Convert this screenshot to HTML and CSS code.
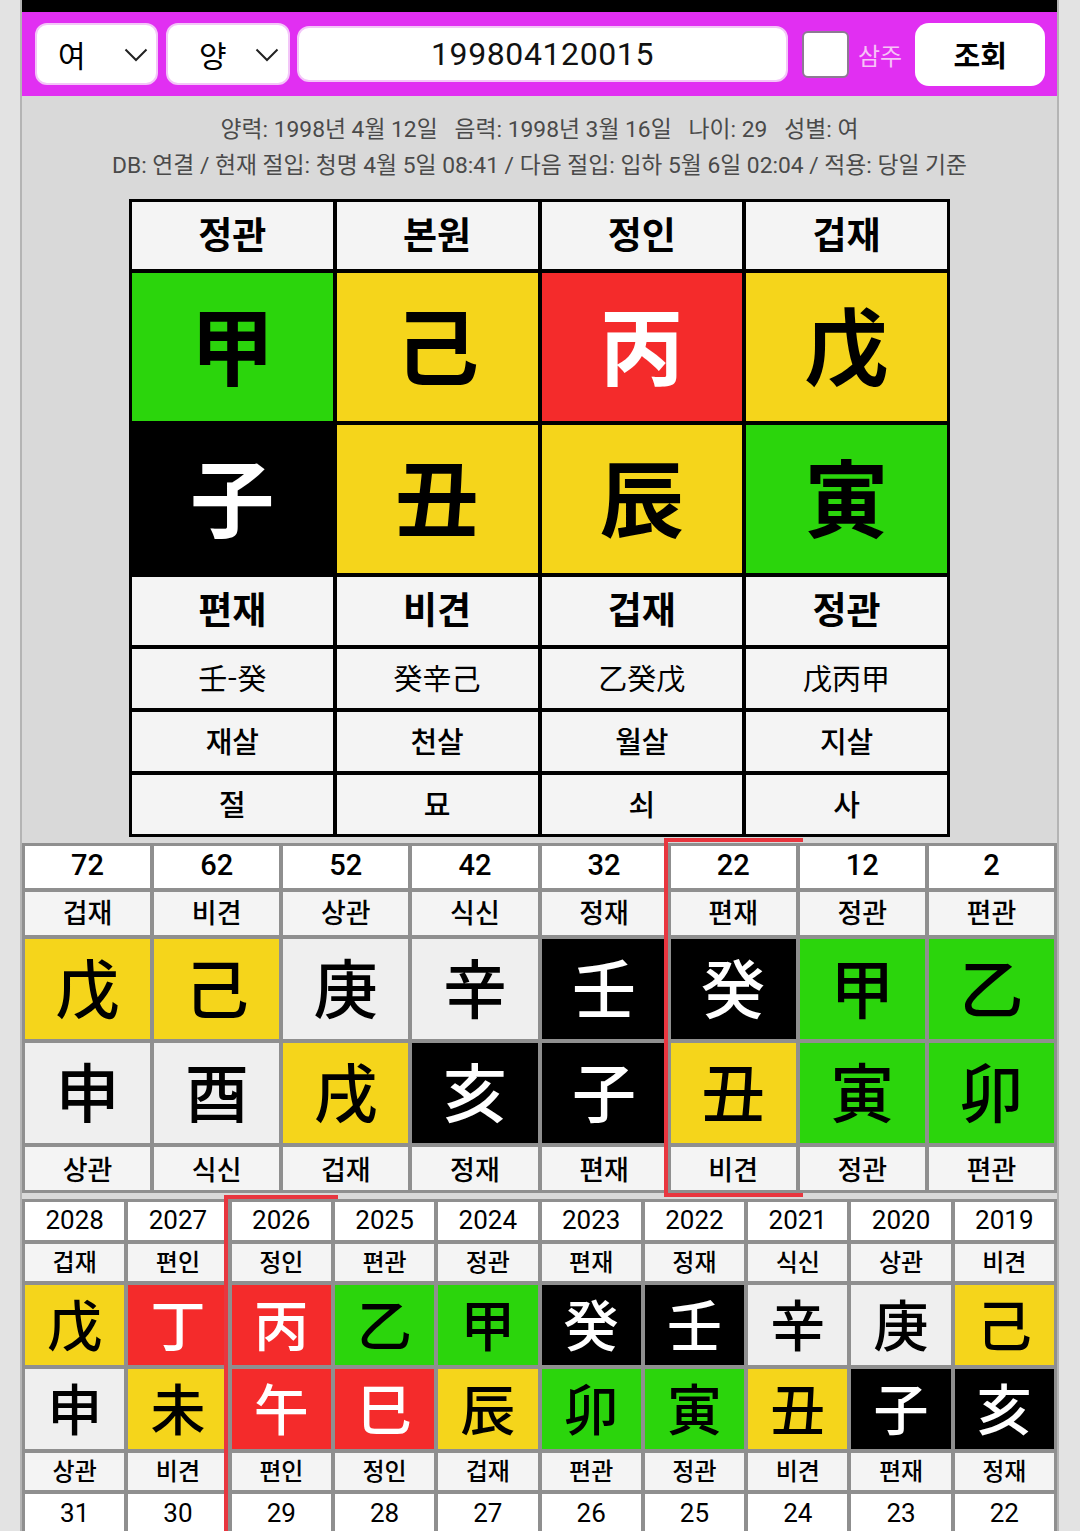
FILE: index.html
```html
<!DOCTYPE html>
<html lang="ko">
<head>
<meta charset="utf-8">
<title>사주</title>
<link rel="stylesheet" href="styles.css">
</head>
<body>
<div class="page">
  <div class="topbar"></div>
  <header class="controls">
    <div class="select sel-gender"><span>여</span>
      <svg class="chev" width="24" height="14" viewBox="0 0 24 14"><path d="M1.5 1.5 L12 12 L22.5 1.5" fill="none" stroke="#222" stroke-width="2"/></svg>
    </div>
    <div class="select sel-cal"><span>양</span>
      <svg class="chev" width="24" height="14" viewBox="0 0 24 14"><path d="M1.5 1.5 L12 12 L22.5 1.5" fill="none" stroke="#222" stroke-width="2"/></svg>
    </div>
    <div class="date-input">199804120015</div>
    <div class="checkbox"></div>
    <span class="check-label">삼주</span>
    <div class="btn">조회</div>
  </header>

  <div class="info">
    <p>양력: 1998년 4월 12일&nbsp;&nbsp;&nbsp;음력: 1998년 3월 16일&nbsp;&nbsp;&nbsp;나이: 29&nbsp;&nbsp;&nbsp;성별: 여</p>
    <p>DB: 연결 / 현재 절입: 청명 4월 5일 08:41 / 다음 절입: 입하 5월 6일 02:04 / 적용: 당일 기준</p>
  </div>

  <div class="pillars">
    <div class="pc head">정관</div><div class="pc head">본원</div><div class="pc head">정인</div><div class="pc head">겁재</div>
    <div class="pc big green">甲</div><div class="pc big yellow">己</div><div class="pc big red">丙</div><div class="pc big yellow">戊</div>
    <div class="pc big black">子</div><div class="pc big yellow">丑</div><div class="pc big yellow">辰</div><div class="pc big green">寅</div>
    <div class="pc head">편재</div><div class="pc head">비견</div><div class="pc head">겁재</div><div class="pc head">정관</div>
    <div class="pc hidden">壬-癸</div><div class="pc hidden">癸辛己</div><div class="pc hidden">乙癸戊</div><div class="pc hidden">戊丙甲</div>
    <div class="pc sub">재살</div><div class="pc sub">천살</div><div class="pc sub">월살</div><div class="pc sub">지살</div>
    <div class="pc sub">절</div><div class="pc sub">묘</div><div class="pc sub">쇠</div><div class="pc sub">사</div>
  </div>

  <div class="daewoon-wrap">
    <div class="daewoon">
      <div class="dc num">72</div><div class="dc num">62</div><div class="dc num">52</div><div class="dc num">42</div><div class="dc num">32</div><div class="dc num">22</div><div class="dc num">12</div><div class="dc num">2</div>
      <div class="dc lbl">겁재</div><div class="dc lbl">비견</div><div class="dc lbl">상관</div><div class="dc lbl">식신</div><div class="dc lbl">정재</div><div class="dc lbl">편재</div><div class="dc lbl">정관</div><div class="dc lbl">편관</div>
      <div class="dc ch yellow">戊</div><div class="dc ch yellow">己</div><div class="dc ch neutral">庚</div><div class="dc ch neutral">辛</div><div class="dc ch black">壬</div><div class="dc ch black">癸</div><div class="dc ch green">甲</div><div class="dc ch green">乙</div>
      <div class="dc ch neutral">申</div><div class="dc ch neutral">酉</div><div class="dc ch yellow">戌</div><div class="dc ch black">亥</div><div class="dc ch black">子</div><div class="dc ch yellow">丑</div><div class="dc ch green">寅</div><div class="dc ch green">卯</div>
      <div class="dc lbl low">상관</div><div class="dc lbl low">식신</div><div class="dc lbl low">겁재</div><div class="dc lbl low">정재</div><div class="dc lbl low">편재</div><div class="dc lbl low">비견</div><div class="dc lbl low">정관</div><div class="dc lbl low">편관</div>
    </div>
    <div class="mark mark-dw"></div>
  </div>

  <div class="seun-wrap">
    <div class="seun">
      <div class="sc num">2028</div><div class="sc num">2027</div><div class="sc num">2026</div><div class="sc num">2025</div><div class="sc num">2024</div><div class="sc num">2023</div><div class="sc num">2022</div><div class="sc num">2021</div><div class="sc num">2020</div><div class="sc num">2019</div>
      <div class="sc lbl">겁재</div><div class="sc lbl">편인</div><div class="sc lbl">정인</div><div class="sc lbl">편관</div><div class="sc lbl">정관</div><div class="sc lbl">편재</div><div class="sc lbl">정재</div><div class="sc lbl">식신</div><div class="sc lbl">상관</div><div class="sc lbl">비견</div>
      <div class="sc ch yellow">戊</div><div class="sc ch red">丁</div><div class="sc ch red">丙</div><div class="sc ch green">乙</div><div class="sc ch green">甲</div><div class="sc ch black">癸</div><div class="sc ch black">壬</div><div class="sc ch neutral">辛</div><div class="sc ch neutral">庚</div><div class="sc ch yellow">己</div>
      <div class="sc ch neutral">申</div><div class="sc ch yellow">未</div><div class="sc ch red">午</div><div class="sc ch red">巳</div><div class="sc ch yellow">辰</div><div class="sc ch green">卯</div><div class="sc ch green">寅</div><div class="sc ch yellow">丑</div><div class="sc ch black">子</div><div class="sc ch black">亥</div>
      <div class="sc lbl">상관</div><div class="sc lbl">비견</div><div class="sc lbl">편인</div><div class="sc lbl">정인</div><div class="sc lbl">겁재</div><div class="sc lbl">편관</div><div class="sc lbl">정관</div><div class="sc lbl">비견</div><div class="sc lbl">편재</div><div class="sc lbl">정재</div>
      <div class="sc num">31</div><div class="sc num">30</div><div class="sc num">29</div><div class="sc num">28</div><div class="sc num">27</div><div class="sc num">26</div><div class="sc num">25</div><div class="sc num">24</div><div class="sc num">23</div><div class="sc num">22</div>
    </div>
    <div class="mark mark-se"></div>
  </div>
</div>
</body>
</html>
```

FILE: styles.css
```css
html, body {
  margin: 0;
  padding: 0;
}
body {
  background: #e3e3e3;
  font-family: Roboto, "Noto Sans CJK KR", sans-serif;
  color: #000;
  overflow: hidden;
  height: 1531px;
}
.page {
  width: 1035px;
  margin-left: 20px;
  border-left: 2px solid #b4b4b4;
  border-right: 2px solid #b4b4b4;
  background: #d9d9d9;
  height: 1531px;
  overflow: hidden;
}
.topbar {
  height: 12px;
  background: #000;
}
.controls {
  height: 84px;
  background: #e12ff2;
  display: flex;
  align-items: center;
  padding-left: 13px;
  box-sizing: border-box;
}
.select {
  height: 62px;
  background: #fff;
  border: 2px solid #f3c6f8;
  border-radius: 12px;
  box-sizing: border-box;
  display: flex;
  align-items: center;
  justify-content: space-between;
  font-size: 30px;
  font-family: "Noto Sans CJK KR", sans-serif;
}
.sel-gender {
  width: 123px;
  padding: 0 8px 0 21px;
}
.sel-cal {
  width: 124px;
  margin-left: 8px;
  padding: 0 9px 0 31px;
}
.chev {
  display: block;
  margin-top: 2px;
}
.date-input {
  width: 491px;
  height: 56px;
  margin-left: 7px;
  background: #fff;
  border: 2px solid #f3c6f8;
  border-radius: 12px;
  box-sizing: border-box;
  text-align: center;
  font-size: 32px;
  line-height: 52px;
  letter-spacing: 0.6px;
  color: #111;
}
.checkbox {
  width: 47px;
  height: 47px;
  margin-left: 14px;
  background: #fff;
  border: 2px solid #8d7a93;
  border-radius: 6px;
  box-sizing: border-box;
}
.check-label {
  margin-left: 9px;
  color: #f7c3f7;
  font-size: 24px;
  font-family: "Noto Sans CJK KR", sans-serif;
}
.btn {
  width: 130px;
  height: 63px;
  margin-left: 13px;
  background: #fff;
  border-radius: 14px;
  display: flex;
  align-items: center;
  justify-content: center;
  font-size: 29px;
  font-weight: 700;
  font-family: "Noto Sans CJK KR", sans-serif;
}
.info {
  padding-top: 16px;
  text-align: center;
  color: #4a4a4a;
  font-size: 22.8px;
}
.info p {
  margin: 0;
  line-height: 36px;
  white-space: nowrap;
}
.pillars {
  width: 821px;
  margin: 15px auto 0;
  display: grid;
  grid-template-columns: repeat(4, 1fr);
  grid-template-rows: 67px 148px 148px 68px 59px 59px 59px;
  gap: 4px;
  padding: 3px;
  box-sizing: border-box;
  background: #000;
}
.pc {
  display: flex;
  align-items: center;
  justify-content: center;
  background: #f4f4f4;
  font-family: "Noto Sans CJK KR", sans-serif;
  padding-bottom: 4px;
}
.pc.head {
  font-size: 37px;
  font-weight: 700;
  padding-bottom: 6px;
}
.pc.big {
  font-size: 84px;
  font-weight: 700;
  padding-bottom: 10px;
}
.pc.hidden {
  font-size: 29px;
  font-weight: 400;
}
.pc.sub {
  font-size: 29px;
  font-weight: 500;
}
.green { background: #2bd50c; color: #000; }
.yellow { background: #f5d51b; color: #000; }
.red { background: #f42b2b; color: #fff; }
.black { background: #000; color: #fff; }
.neutral { background: #efefef; color: #000; }

.daewoon-wrap,
.seun-wrap {
  position: relative;
}
.daewoon-wrap {
  margin-top: 6px;
}
.daewoon {
  display: grid;
  grid-template-columns: repeat(8, 1fr);
  grid-template-rows: 42px 43px 100px 100px 43px;
  gap: 4px;
  padding: 3px;
  background: #8f8f8f;
}
.dc, .sc {
  display: flex;
  align-items: center;
  justify-content: center;
}
.num {
  background: #fff;
  font-family: Roboto, sans-serif;
  font-weight: 500;
}
.lbl {
  background: #f4f4f4;
  font-family: "Noto Sans CJK KR", sans-serif;
  font-weight: 500;
}
.dc.num { font-size: 29px; padding-bottom: 4px; }
.dc.lbl { font-size: 27px; padding-bottom: 4px; }
.dc.lbl.low { padding-bottom: 0; }
.dc.ch {
  font-size: 64px;
  font-weight: 500;
  font-family: "Noto Sans CJK KR", sans-serif;
  padding-bottom: 9px;
}
.seun-wrap {
  margin-top: 6px;
}
.seun {
  display: grid;
  grid-template-columns: repeat(10, 1fr);
  grid-template-rows: 38px 37px 80px 80px 37px 40px;
  gap: 4px;
  padding: 3px;
  background: #8f8f8f;
}
.sc.num { font-size: 26px; font-weight: 400; padding-bottom: 2px; }
.sc.lbl { font-size: 24px; padding-bottom: 5px; }
.sc.ch {
  font-size: 55px;
  font-weight: 500;
  font-family: "Noto Sans CJK KR", sans-serif;
  padding-bottom: 6px;
}
.mark {
  position: absolute;
  box-sizing: border-box;
  border: 4px solid #e8363f;
  border-right: none;
  pointer-events: none;
}
.mark-dw {
  left: 642px;
  top: -5px;
  width: 139px;
  height: 359px;
}
.mark-se {
  left: 202px;
  top: -4px;
  width: 114px;
  height: 400px;
  border-bottom: none;
}
```
